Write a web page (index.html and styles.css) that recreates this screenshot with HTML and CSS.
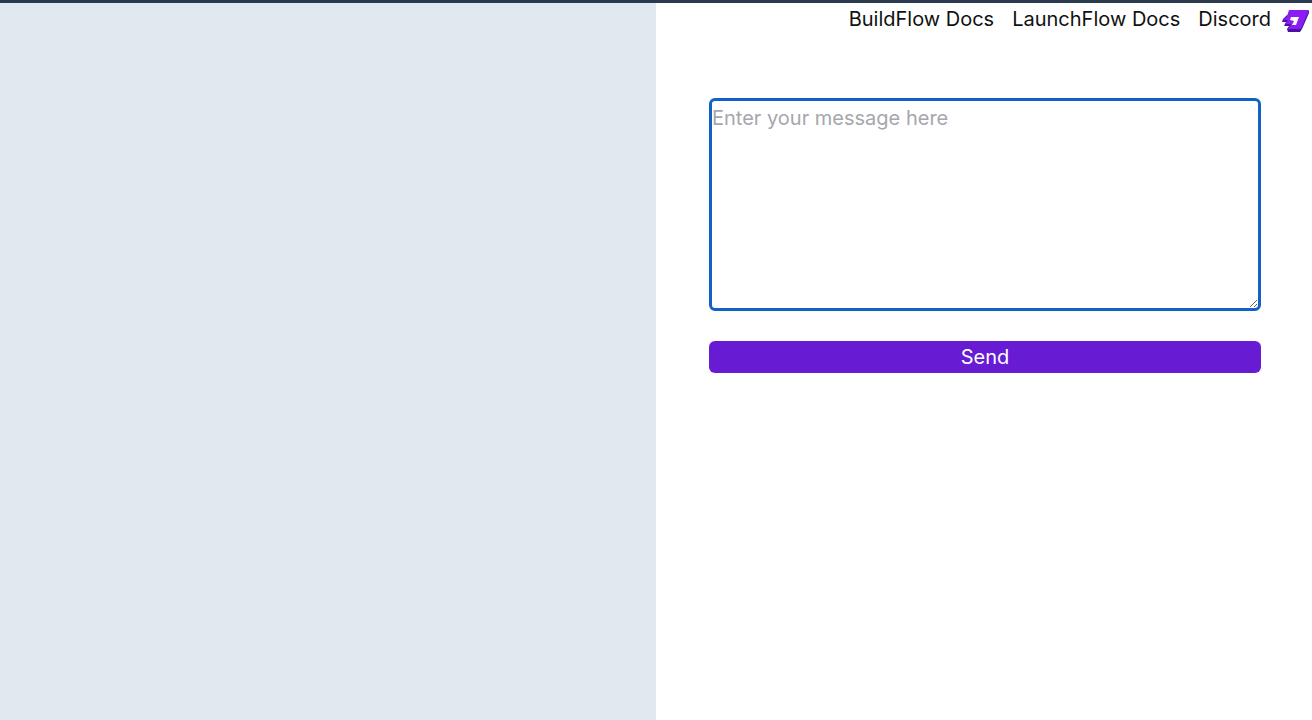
FILE: index.html
```html
<!DOCTYPE html>
<html lang="en">
<head>
<meta charset="utf-8">
<meta name="viewport" content="width=device-width, initial-scale=1">
<title>LaunchFlow Chat</title>
<link rel="stylesheet" href="styles.css">
</head>
<body>
<div class="app">
  <section class="history" aria-label="Conversation"></section>
  <main class="panel">
    <nav class="nav">
      <a class="nav-link" href="#buildflow">BuildFlow Docs</a>
      <a class="nav-link" href="#launchflow">LaunchFlow Docs</a>
      <a class="nav-link" href="#discord">Discord</a>
      <a class="nav-logo" href="#home" aria-label="LaunchFlow home">
        <svg class="logo" viewBox="0 0 28 24" aria-hidden="true">
          <path fill="#4a12a0" d="M5 6 L1 10 L0 13 H4 L2 17 H7 L5 20 L6 23 H18 L20 20 L27 4 V1 L18 16 Z"/>
          <path fill="#8a1df2" d="M7 1 H27 L19 20 H6 L9 15 H3 L6 11 H1 L5 7 Z"/>
          <path fill="#fff" d="M9 8 H17 L14 16 H10 L12 12 L8 11 Z"/>
        </svg>
      </a>
    </nav>
    <form class="composer">
      <textarea class="message" aria-label="Message" placeholder="Enter your message here"></textarea>
      <button class="send" type="button">Send</button>
    </form>
  </main>
</div>
</body>
</html>
```
FILE: styles.css
```css
* {
  box-sizing: border-box;
}

body {
  margin: 0;
  font-family: Inter, "Liberation Sans", sans-serif;
  font-size: 20px;
  line-height: 32px;
  color: #111;
  background: #fff;
}

.app {
  display: grid;
  grid-template-columns: 1fr 1fr;
  min-height: 100vh;
  border-top: 3px solid #2b3b4e;
}

.history {
  background: #e1e8f0;
}

.nav {
  display: flex;
  justify-content: flex-end;
  align-items: center;
  gap: 18px;
  padding-right: 2px;
}

.nav-link {
  color: inherit;
  text-decoration: none;
}

.nav-logo {
  display: flex;
  margin-left: -7px;
  padding-top: 4px;
}

.logo {
  width: 28px;
  height: 24px;
}

.composer {
  display: flex;
  flex-direction: column;
  gap: 30px;
  padding: 63px 51px 0 53px;
}

.message {
  height: 213px;
  padding: 1px 0;
  border: 3px solid #1262c4;
  border-radius: 6px;
  outline: none;
  background: #fff;
  color: #111;
  font: inherit;
  resize: vertical;
}

.message::placeholder {
  color: #a5a7ad;
}

.send {
  height: 32px;
  padding: 0;
  border: 0;
  border-radius: 6px;
  background: #671bd3;
  color: #fff;
  font: inherit;
}
```
